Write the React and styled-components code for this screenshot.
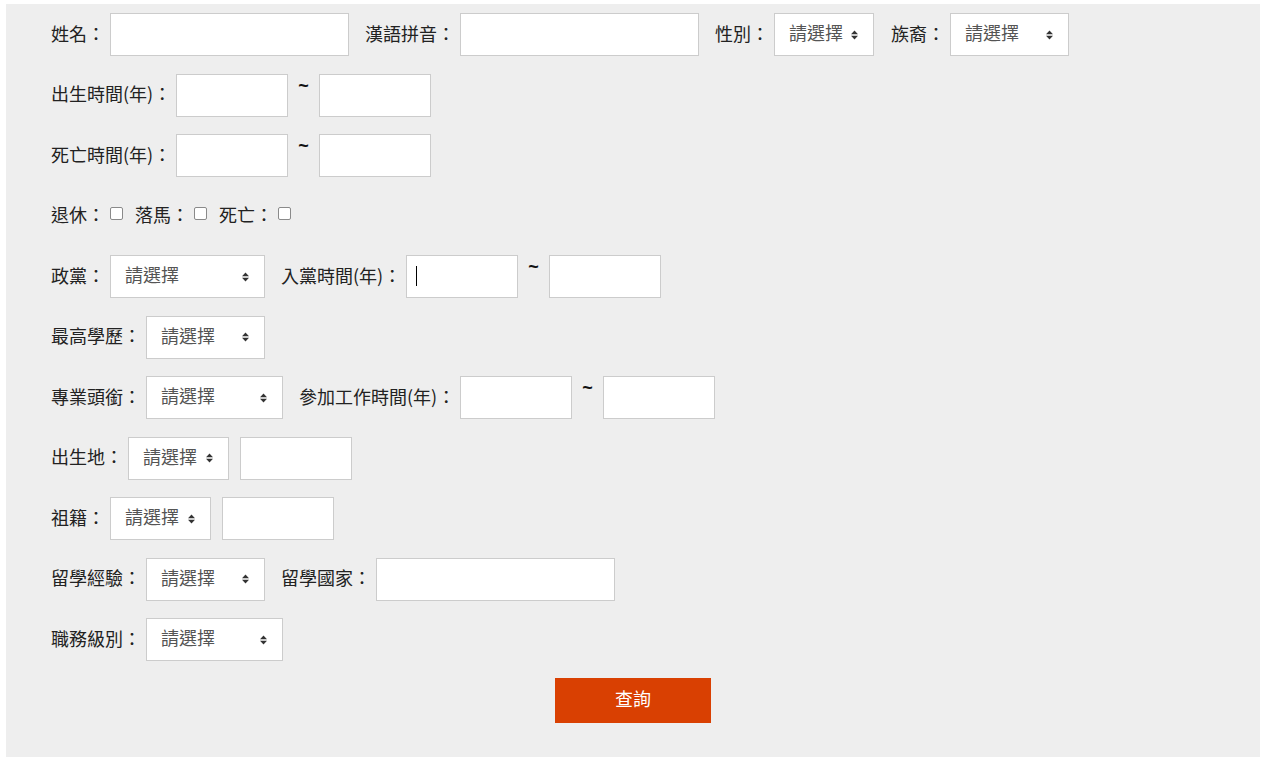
import React from 'react';
import styled, { createGlobalStyle } from 'styled-components';

const Global = createGlobalStyle`
  html, body { margin: 0; padding: 0; background: #fff; }
  body { font-family: "Noto Sans CJK TC", "Noto Sans", sans-serif; color: #222; }
`;

const Panel = styled.form`
  margin: 4px 6px 6px;
  background: #eeeeee;
  padding: 9px 45px 34px 45px;
  display: flex;
  flex-direction: column;
`;

const Rows = styled.div`
  display: flex;
  flex-direction: column;
  gap: 17.5px;
`;

const Row = styled.div`
  display: flex;
  align-items: center;
  height: 43px;
`;

const Group = styled.div`
  display: flex;
  align-items: center;
  margin-right: ${(p) => (p.$gap ?? 16)}px;
`;

const Label = styled.label`
  font-size: 18px;
  line-height: 18px;
  padding-bottom: 4px;
  margin-right: 5px;
  white-space: nowrap;
  color: #222;
`;

const InputBox = styled.div`
  position: relative;
  display: flex;
`;

const TextInput = styled.input`
  box-sizing: border-box;
  width: ${(p) => p.$w}px;
  height: 43px;
  margin: 0;
  border: 1px solid #ccc;
  border-radius: 0;
  background: #fff;
  padding: 0 9px;
  font-family: inherit;
  font-size: 18px;
  color: #222;
  outline: none;
  caret-color: #000;
`;

const FakeCaret = styled.span`
  position: absolute;
  left: 10px;
  top: 11px;
  width: 1px;
  height: 20px;
  background: #000;
  pointer-events: none;
`;

const SelectWrap = styled.div`
  position: relative;
  width: ${(p) => p.$w}px;
  height: 43px;
  margin-right: ${(p) => p.$mr || 0}px;
`;

const Select = styled.select`
  appearance: none;
  -webkit-appearance: none;
  box-sizing: border-box;
  width: 100%;
  height: 100%;
  margin: 0;
  border: 1px solid #ccc;
  border-radius: 0;
  background: #fff;
  padding: 0 0 5px 14px;
  font-family: inherit;
  font-size: 18px;
  color: #555;
  outline: none;
`;

const Caret = styled.svg`
  position: absolute;
  right: 16px;
  top: 50%;
  margin-top: -5px;
  pointer-events: none;
`;

const Tilde = styled.span`
  align-self: flex-start;
  margin: 2px 10px 0 10px;
  font-family: "Liberation Sans", Arial, sans-serif;
  font-size: 18px;
  font-weight: bold;
  line-height: 20px;
  color: #111;
`;

const Check = styled.input.attrs({ type: 'checkbox' })`
  appearance: none;
  -webkit-appearance: none;
  box-sizing: border-box;
  width: 13px;
  height: 13px;
  margin: 0 0 5px;
  border: 1px solid #8a8a8a;
  border-radius: 2px;
  background: #fff;
`;

const Submit = styled.button`
  align-self: center;
  margin-top: 17px;
  width: 156px;
  height: 45px;
  padding: 0 0 5px;
  border: none;
  border-radius: 0;
  background: #d94002;
  color: #fff;
  font-family: inherit;
  font-size: 18px;
  cursor: pointer;
`;

function Dropdown({ w, mr }) {
  return (
    <SelectWrap $w={w} $mr={mr}>
      <Select defaultValue="">
        <option value="">請選擇</option>
      </Select>
      <Caret width="7" height="10" viewBox="0 0 7 10">
        <polygon points="0,4.2 3.5,0.5 7,4.2" fill="#333" />
        <polygon points="0,5.8 3.5,9.5 7,5.8" fill="#333" />
      </Caret>
    </SelectWrap>
  );
}

function Range({ focus }) {
  return (
    <>
      <InputBox>
        <TextInput $w={112} />
        {focus && <FakeCaret />}
      </InputBox>
      <Tilde>~</Tilde>
      <TextInput $w={112} />
    </>
  );
}

export default function App() {
  return (
    <>
      <Global />
      <Panel onSubmit={(e) => e.preventDefault()}>
        <Rows>
          <Row>
            <Group><Label>姓名：</Label><TextInput $w={239} /></Group>
            <Group><Label>漢語拼音：</Label><TextInput $w={239} /></Group>
            <Group $gap={17}><Label>性別：</Label><Dropdown w={100} /></Group>
            <Group><Label>族裔：</Label><Dropdown w={119} /></Group>
          </Row>
          <Row>
            <Group><Label>出生時間(年)：</Label><Range /></Group>
          </Row>
          <Row>
            <Group><Label>死亡時間(年)：</Label><Range /></Group>
          </Row>
          <Row>
            <Group $gap={12}><Label>退休：</Label><Check /></Group>
            <Group $gap={12}><Label>落馬：</Label><Check /></Group>
            <Group $gap={12}><Label>死亡：</Label><Check /></Group>
          </Row>
          <Row>
            <Group><Label>政黨：</Label><Dropdown w={155} /></Group>
            <Group><Label>入黨時間(年)：</Label><Range focus /></Group>
          </Row>
          <Row>
            <Group><Label>最高學歷：</Label><Dropdown w={119} /></Group>
          </Row>
          <Row>
            <Group><Label>專業頭銜：</Label><Dropdown w={137} /></Group>
            <Group><Label>參加工作時間(年)：</Label><Range /></Group>
          </Row>
          <Row>
            <Group><Label>出生地：</Label><Dropdown w={101} mr={11} /><TextInput $w={112} /></Group>
          </Row>
          <Row>
            <Group><Label>祖籍：</Label><Dropdown w={101} mr={11} /><TextInput $w={112} /></Group>
          </Row>
          <Row>
            <Group><Label>留學經驗：</Label><Dropdown w={119} /></Group>
            <Group><Label>留學國家：</Label><TextInput $w={239} /></Group>
          </Row>
          <Row>
            <Group><Label>職務級別：</Label><Dropdown w={137} /></Group>
          </Row>
        </Rows>
        <Submit type="submit">查詢</Submit>
      </Panel>
    </>
  );
}
